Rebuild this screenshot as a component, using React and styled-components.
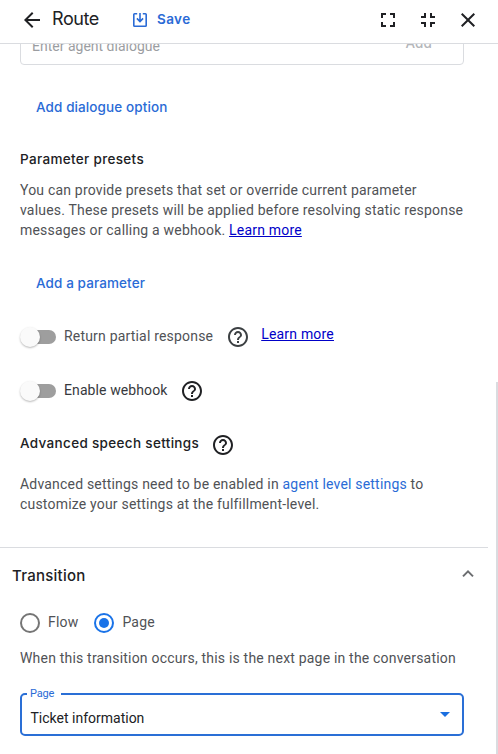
import React from "react";
import styled, { createGlobalStyle } from "styled-components";

const GlobalStyle = createGlobalStyle`
  *, *::before, *::after { box-sizing: border-box; }
  html, body { margin: 0; background: #fff; overflow: hidden; }
  body { font-family: Roboto, "Liberation Sans", sans-serif; color: #202124; }
  h1, h2, h3, p { margin: 0; font-weight: 400; }
  button { padding: 0; border: 0; background: none; font: inherit; color: inherit; cursor: pointer; }
  svg { display: block; flex: none; }
`;

const Panel = styled.main`
  display: flex;
  flex-direction: column;
  width: 498px;
  height: 754px;
  background: #fff;
`;

const Header = styled.header`
  display: flex;
  align-items: center;
  flex: none;
  height: 44px;
  padding: 0 18px 4px 20px;
  border-bottom: 1px solid #dadce0;
`;

const Title = styled.h1`
  width: 80px;
  margin-left: 8px;
  padding-bottom: 2px;
  font: 400 18px/22px Inter, sans-serif;
  letter-spacing: -0.4px;
`;

const SaveButton = styled.button`
  display: flex;
  align-items: center;
  gap: 9px;
  margin-right: auto;
  color: #2a6bd6;
  font: 600 13.5px/20px Inter, sans-serif;
  letter-spacing: 0.4px;
`;

const SaveText = styled.span`
  padding-bottom: 2px;
`;

const WindowActions = styled.div`
  display: flex;
  gap: 16px;
`;

const IconButton = styled.button`
  display: flex;
  flex: none;
`;

const Scroller = styled.div`
  display: flex;
  flex: 1;
  min-height: 0;
  overflow: hidden;
`;

const Content = styled.div`
  width: 488px;
  flex: none;
`;

const ScrollTrack = styled.div`
  display: flex;
  flex: 1;
  justify-content: flex-end;
  padding-top: 338px;
`;

const ScrollThumb = styled.div`
  width: 2px;
  background: #dadce0;
`;

const Section = styled.section`
  display: flex;
  flex-direction: column;
  align-items: flex-start;
  padding: 0 24px 0 20px;
`;

const DialogueField = styled.div`
  display: flex;
  justify-content: space-between;
  width: 444px;
  height: 44px;
  margin-top: -23px;
  padding: 14px 31px 0 11px;
  border: 1px solid #dadce0;
  border-radius: 4px;
  color: #9b9da1;
  font-size: 14px;
  line-height: 20px;
  letter-spacing: 0;
`;

const AddLabel = styled.span`
  margin-top: -3px;
  color: #b4b6ba;
  font: 500 13.5px/20px Inter, sans-serif;
  letter-spacing: 0.1px;
`;

const TextButton = styled.button`
  height: 20px;
  margin: ${(p) => p.$top}px 0 0 16px;
  color: #2a6bd6;
  font: 500 13.5px/20px Inter, sans-serif;
  letter-spacing: 0.1px;
`;

const Heading = styled.h2`
  display: flex;
  align-items: center;
  height: ${(p) => p.$height || 20}px;
  margin-top: ${(p) => p.$top}px;
  font: 500 13.5px/20px Inter, sans-serif;
  letter-spacing: 0.33px;
  white-space: nowrap;
`;

const HeadingText = styled.span`
  margin: 0 12px 4px 0;
`;

const Copy = styled.p`
  margin-top: ${(p) => p.$top}px;
  color: #505256;
  font-size: 14px;
  line-height: 20px;
  letter-spacing: 0.195px;
  white-space: nowrap;
`;

const DocLink = styled.a`
  color: #0000c8;
  font-size: 14px;
  line-height: 20px;
  letter-spacing: 0.195px;
  text-decoration: underline;
`;

const InlineLink = styled.a`
  color: #2a6bd6;
`;

const ToggleRow = styled.div`
  display: flex;
  align-items: center;
  height: 24px;
  margin-top: ${(p) => p.$top}px;
`;

const ToggleTrack = styled.span`
  display: flex;
  align-items: center;
  width: 35px;
  height: 14px;
  margin: 0 8px 0 1px;
  border-radius: 7px;
  background: #9e9e9e;
`;

const ToggleKnob = styled.span`
  flex: none;
  width: 20px;
  height: 20px;
  margin-left: -1px;
  border-radius: 50%;
  background: #fafafa;
  box-shadow: 0 1px 2px rgba(0, 0, 0, 0.28);
`;

const ControlLabel = styled.span`
  margin: 0 ${(p) => p.$gap || 0}px 2px 0;
  color: ${(p) => (p.$dark ? "#37393d" : "#505256")};
  font-size: 14px;
  line-height: 20px;
  letter-spacing: ${(p) => (p.$dark ? 0.1 : 0.19)}px;
`;

const LinkSlot = styled.span`
  display: flex;
  margin: 0 0 6px 11px;
`;

const Divider = styled.hr`
  width: 488px;
  height: 1px;
  margin: 33px 0 0;
  border: 0;
  background: #dadce0;
`;

const TransitionHeader = styled.div`
  display: flex;
  align-items: center;
  justify-content: space-between;
  height: 24px;
  margin-top: 14px;
  padding: 0 8px 0 12px;
`;

const TransitionTitle = styled.h2`
  padding-top: 3px;
  font: 500 15px/24px Inter, sans-serif;
  letter-spacing: 0.25px;
`;

const RadioRow = styled.div`
  display: flex;
  align-items: center;
  height: 20px;
  margin-top: 27px;
`;

const RadioCircle = styled.span`
  display: flex;
  align-items: center;
  justify-content: center;
  width: 20px;
  height: 20px;
  margin-right: 8px;
  border: 2px solid ${(p) => (p.$checked ? "#1a73e8" : "#757575")};
  border-radius: 50%;

  &::after {
    content: "";
    width: 10px;
    height: 10px;
    border-radius: 50%;
    background: ${(p) => (p.$checked ? "#1a73e8" : "transparent")};
  }
`;

const SelectBox = styled.div`
  position: relative;
  display: flex;
  align-items: center;
  justify-content: space-between;
  width: 444px;
  height: 43px;
  margin-top: 25px;
  padding: 0 12px 0 8.5px;
  border: 2px solid #2a6fd6;
  border-radius: 5px;
  font-size: 14px;
  line-height: 20px;
  letter-spacing: 0;
`;

const SelectValue = styled.span`
  padding-top: 7px;
`;

const FloatingLabel = styled.span`
  position: absolute;
  top: -8px;
  left: 5px;
  width: 34px;
  padding-left: 3px;
  background: #fff;
  color: #2a6bd6;
  font-size: 11px;
  line-height: 14px;
  letter-spacing: -0.15px;
`;

const icons = {
  back: "M20 11H7.83l5.59-5.59L12 4l-8 8 8 8 1.41-1.41L7.83 13H20v-2z",
  expand:
    "M7 14H5v5h5v-2H7v-3zm-2-4h2V7h3V5H5v5zm12 7h-3v2h5v-5h-2v3zM14 5v2h3v3h2V5h-5z",
  shrink:
    "M5 16h3v3h2v-5H5v2zm3-8H5v2h5V5H8v3zm6 11h2v-3h3v-2h-5v5zm2-11V5h-2v5h5V8h-3z",
  close:
    "M19 6.41L17.59 5 12 10.59 6.41 5 5 6.41 10.59 12 5 17.59 6.41 19 12 13.41 17.59 19 19 17.59 13.41 12z",
  help:
    "M11 18h2v-2h-2v2zm1-16C6.48 2 2 6.48 2 12s4.48 10 10 10 10-4.48 10-10S17.52 2 12 2zm0 18c-4.41 0-8-3.59-8-8s3.59-8 8-8 8 3.59 8 8-3.59 8-8 8zm0-14c-2.21 0-4 1.79-4 4h2c0-1.1.9-2 2-2s2 .9 2 2c0 2-3 1.75-3 5h2c0-2.25 3-2.5 3-5 0-2.21-1.79-4-4-4z",
};

function Icon({ name, color = "#202124" }) {
  return (
    <svg width="24" height="24" viewBox="0 0 24 24" fill={color} aria-hidden="true">
      <path d={icons[name]} />
    </svg>
  );
}

function SaveIcon() {
  return (
    <svg width="16" height="16" viewBox="0 0 16 16" fill="none" stroke="#2a6bd6" aria-hidden="true">
      <path d="M5.2 1.8H2.6a.8.8 0 0 0-.8.8v10.8a.8.8 0 0 0 .8.8h10.8a.8.8 0 0 0 .8-.8V2.6a.8.8 0 0 0-.8-.8h-2.6" strokeWidth="1.6" />
      <path d="M8 1v8.4M4.9 6.4 8 9.5l3.1-3.1" strokeWidth="1.6" />
    </svg>
  );
}

function Toggle({ label, top, gap, dark, children }) {
  return (
    <ToggleRow $top={top}>
      <ToggleTrack role="switch" aria-checked="false">
        <ToggleKnob />
      </ToggleTrack>
      <ControlLabel $gap={gap} $dark={dark}>{label}</ControlLabel>
      {children}
    </ToggleRow>
  );
}

export default function App() {
  return (
    <>
      <GlobalStyle />
      <Panel>
        <Header>
          <IconButton aria-label="Back"><Icon name="back" /></IconButton>
          <Title>Route</Title>
          <SaveButton><SaveIcon /><SaveText>Save</SaveText></SaveButton>
          <WindowActions>
            <IconButton aria-label="Expand"><Icon name="expand" /></IconButton>
            <IconButton aria-label="Shrink"><Icon name="shrink" /></IconButton>
            <IconButton aria-label="Close"><Icon name="close" /></IconButton>
          </WindowActions>
        </Header>
        <Scroller>
          <Content>
            <Section>
              <DialogueField>
                <span>Enter agent dialogue</span>
                <AddLabel>Add</AddLabel>
              </DialogueField>
              <TextButton $top={32}>Add dialogue option</TextButton>
              <Heading $top={32}>Parameter presets</Heading>
              <Copy $top={11}>
                You can provide presets that set or override current parameter<br />
                values. These presets will be applied before resolving static response<br />
                messages or calling a webhook. <DocLink>Learn more</DocLink>
              </Copy>
              <TextButton $top={33}>Add a parameter</TextButton>
              <Toggle label="Return partial response" top={32} gap={13}>
                <Icon name="help" color="#3c4043" />
                <LinkSlot><DocLink>Learn more</DocLink></LinkSlot>
              </Toggle>
              <Toggle label="Enable webhook" top={30} gap={12.5} dark>
                <Icon name="help" />
              </Toggle>
              <Heading $top={30} $height={24}>
                <HeadingText>Advanced speech settings</HeadingText>
                <Icon name="help" />
              </Heading>
              <Copy $top={17}>
                Advanced settings need to be enabled in <InlineLink>agent level settings</InlineLink> to<br />
                customize your settings at the fulfillment-level.
              </Copy>
            </Section>
            <Divider />
            <TransitionHeader>
              <TransitionTitle>Transition</TransitionTitle>
              <svg width="24" height="24" viewBox="0 0 24 24" fill="none" stroke="#6b6d70" strokeWidth="2" aria-hidden="true">
                <path d="m7 14.4 5-5 5 5" />
              </svg>
            </TransitionHeader>
            <Section>
              <RadioRow>
                <RadioCircle />
                <ControlLabel $gap={16}>Flow</ControlLabel>
                <RadioCircle $checked />
                <ControlLabel>Page</ControlLabel>
              </RadioRow>
              <Copy $top={15}>When this transition occurs, this is the next page in the conversation</Copy>
              <SelectBox>
                <FloatingLabel>Page</FloatingLabel>
                <SelectValue>Ticket information</SelectValue>
                <svg width="10" height="5" viewBox="0 0 10 5" fill="#1a6fe0" aria-hidden="true">
                  <path d="M0 0h10L5 5z" />
                </svg>
              </SelectBox>
            </Section>
          </Content>
          <ScrollTrack><ScrollThumb /></ScrollTrack>
        </Scroller>
      </Panel>
    </>
  );
}
